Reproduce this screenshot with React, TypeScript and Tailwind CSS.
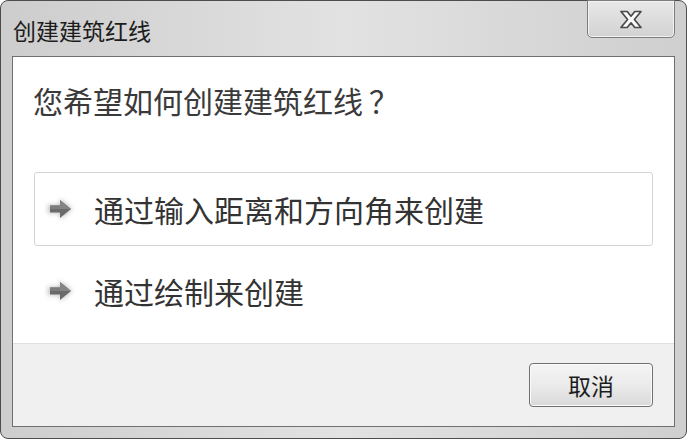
import React from 'react';

const cjk = '"Noto Sans CJK SC", "Noto Sans", sans-serif';

function CloseGlyph() {
  return (
    <svg width="24" height="19" viewBox="0 0 24 19">
      <path
        d="M2 1.5 H8.2 L12 6.2 L15.8 1.5 H22 L15.4 9.5 L22 17.5 H15.8 L12 12.8 L8.2 17.5 H2 L8.6 9.5 Z"
        fill="#fafafa"
        stroke="#4a4a4a"
        strokeWidth="1.7"
        strokeLinejoin="round"
      />
    </svg>
  );
}

function ArrowIcon() {
  return (
    <svg width="34" height="30" viewBox="0 0 34 30">
      <defs>
        <filter id="glow" x="-50%" y="-50%" width="200%" height="200%">
          <feGaussianBlur stdDeviation="2.6" />
        </filter>
      </defs>
      <path d="M4 11 H16 V5 L28 15 L16 25 V19 H4 Z" fill="#bdbdbd" filter="url(#glow)" />
      <path d="M6 11.5 H16 V6 L27 15 L16 24 V18.5 H6 Z" fill="#6a6a6a" />
      <path d="M16 6 L27 15 L16 15 Z" fill="#858585" />
      <path d="M6 11.5 H16 V15 H6 Z" fill="#7c7c7c" />
    </svg>
  );
}

function Option({ text, boxed }: { text: string; boxed?: boolean }) {
  return (
    <div
      className={`flex h-[74px] items-center rounded-[3px] pl-[9px] ${
        boxed ? 'border border-[#d4d4d4]' : 'border border-transparent'
      }`}>
      <ArrowIcon />
      <span className="ml-[16px] text-[30px] leading-none text-[#333333]">{text}</span>
    </div>
  );
}

export default function App() {
  return (
    <div className="w-[688px] h-[440px] bg-white" style={{ fontFamily: cjk }}>
      <div className="flex h-[439px] w-[687px] flex-col rounded-[8px] border border-[#4d4d4d] bg-gradient-to-r from-[#cdcdcd] via-[#e2e2e2] to-[#cfcfcf] px-[11px] pb-[11px]">
        <div className="flex h-[55px] shrink-0 items-start justify-between">
          <span className="ml-[1px] mt-[15px] text-[23px] leading-[28px] text-[#1c1c1c]">
            创建建筑红线
          </span>
          <div className="-mt-[1px] flex h-[38px] w-[88px] items-center justify-center rounded-b-[5px] border border-[#7d7d7d] bg-gradient-to-b from-[#e8e8e8] to-[#d2d2d2] shadow-[inset_0_0_0_1px_#f2f2f2]">
            <CloseGlyph />
          </div>
        </div>
        <div className="flex flex-1 flex-col border border-[#707070] bg-white">
          <div className="flex-1 px-[21px]">
            <p className="ml-[-1px] mt-[23px] text-[30px] leading-[40px] text-[#3a3a3a]">
              您希望如何创建建筑红线<span className="ml-[6px]">？</span>
            </p>
            <div className="mt-[52px] flex flex-col gap-[8px]">
              <Option text="通过输入距离和方向角来创建" boxed />
              <Option text="通过绘制来创建" />
            </div>
          </div>
          <div className="flex h-[83px] items-center justify-end border-t border-[#dfdfdf] bg-[#f0f0f0] pr-[21px]">
            <button className="flex h-[44px] w-[124px] items-center justify-center rounded-[4px] border border-[#707070] bg-gradient-to-b from-[#f4f4f4] via-[#ebebeb] to-[#d9d9d9] text-[23px] text-[#1c1c1c] shadow-[inset_0_0_0_1px_#fbfbfb]">
              取消
            </button>
          </div>
        </div>
      </div>
    </div>
  );
}
